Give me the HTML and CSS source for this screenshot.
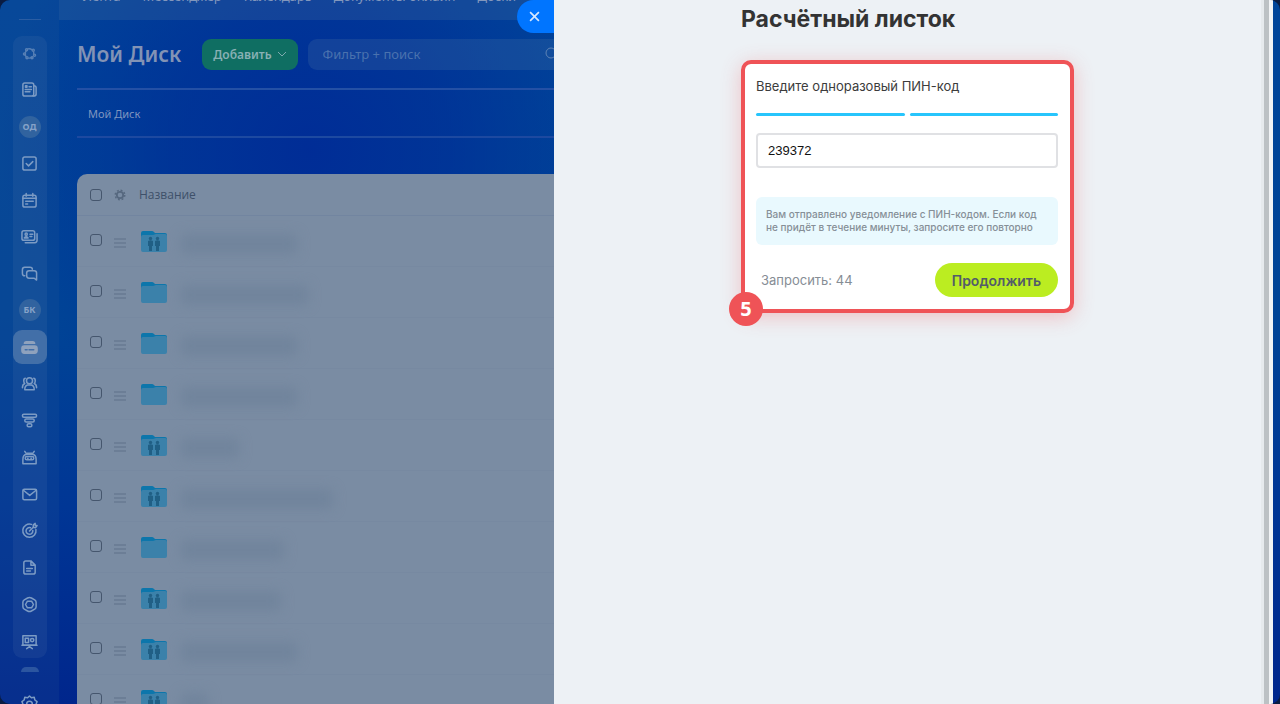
FILE: index.html
```html
<!DOCTYPE html>
<html lang="ru">
<head>
<meta charset="utf-8">
<title>Расчётный листок</title>
<link rel="stylesheet" href="styles.css">
</head>
<body>
<svg class="defs" aria-hidden="true">
  <symbol id="folder" viewBox="0 0 26 22">
    <path d="M0 2q0-2 2-2h9q1 0 2 1l1 1h10q2 0 2 2v5H0z" fill="#0d76ab"/>
    <path d="M0 6q0-2 2-2h10l3-1h9q2 0 2 2v14q0 2-2 2H2q-2 0-2-2z" fill="#3b81aa"/>
  </symbol>
  <symbol id="people" viewBox="0 0 26 22">
    <g fill="#205f85"><circle cx="9.500" cy="7.500" r="1.700"/><circle cx="16.500" cy="7.500" r="1.700"/>
    <path d="M7 10q2.500-1.500 5 0v5h-1v5H8v-5H7zM14 10q2.500-1.500 5 0v5h-1v5h-3v-5h-1z"/></g>
  </symbol>
  <symbol id="lines" viewBox="0 0 12 10"><path d="M0 1h12M0 5h12M0 9h12" stroke="#5f7189" stroke-width="1.200"/></symbol>
</svg>
<div class="portal">
  <nav class="sidebar" aria-label="Разделы">
    <hr class="side-rule">
    <div class="side-menu">
      <a href="#" class="side-item dim" aria-label="Совместная работа"><svg viewBox="0 0 18 18"><path d="M4 8a5 5 0 0 1 2-3M7 3.500a5.500 5.500 0 0 1 5 1M14 7v2M13 13a6 6 0 0 1-5 1.500M5 13l-1.500-3"/><circle cx="5.500" cy="4.500" r="1.300"/><circle cx="13.500" cy="5" r="1.300"/><circle cx="15" cy="11" r="1.300"/><circle cx="3" cy="9.500" r="1.300"/><circle cx="6" cy="14" r="1.300"/><circle cx="12" cy="14" r="1.300"/></svg></a>
      <a href="#" class="side-item" aria-label="Лента"><svg viewBox="0 0 18 18"><rect x="2" y="2" width="11.500" height="14" rx="2"/><path d="M13.500 5q2.500 0 2.500 2v7q0 2-3 2M4.500 9h6.500M4.500 11.500h5M8.500 6H11"/><rect x="4.800" y="5" width="1.500" height="1.500"/></svg></a>
      <a href="#" class="side-item"><span class="round">ОД</span></a>
      <a href="#" class="side-item" aria-label="Задачи"><svg viewBox="0 0 18 18"><rect x="2" y="2" width="14" height="14" rx="2"/><path d="M5.500 9l2.500 2.500 4.500-4.500"/></svg></a>
      <a href="#" class="side-item" aria-label="Календарь"><svg viewBox="0 0 18 18"><rect x="2" y="3.500" width="14" height="12.500" rx="2"/><path d="M2 6.500h14M5.500 1.500v3M12.500 1.500v3"/><path d="M5 9.800h2M8 9.800h2M11 9.800h2M5 12.800h2"/></svg></a>
      <a href="#" class="side-item" aria-label="Контакты"><svg viewBox="0 0 18 18"><rect x="1" y="3" width="13.500" height="10" rx="2"/><path d="M4.500 15.500h10q2.500 0 2.500-2.500V6M9.500 6.500h3M9.500 9h2"/><circle cx="5.500" cy="6.500" r="1.200"/><path d="M3.500 10.500q2-2.500 4 0z"/></svg></a>
      <a href="#" class="side-item" aria-label="Чаты"><svg viewBox="0 0 18 18"><path d="M4 11.500q-2.500 0-2.500-2.500V5q0-2.500 2.500-2.500h5.500Q12 2.500 12 4.500"/><path d="M8.500 6h5.500q2.500 0 2.500 2.500V16l-2.500-2H8.500Q6 14 6 11.500v-3Q6 6 8.500 6z"/></svg></a>
      <a href="#" class="side-item"><span class="round">БК</span></a>
      <a href="#" class="side-item active" aria-label="Диск"><svg viewBox="0 0 18 18"><path d="M3.500 4.500Q4 3 5.500 3h7q1.500 0 2 1.500z" fill="#8fa2bd"/><rect x="1" y="7.500" width="16" height="7.500" rx="2.500" fill="#8fa2bd"/><path d="M4.500 11.300h2M8.500 11.300h5" class="cut"/></svg></a>
      <a href="#" class="side-item" aria-label="Сотрудники"><svg viewBox="0 0 18 18"><circle cx="9" cy="6" r="3.200"/><path d="M4 15.500q0-4.500 3-5h4q3 .5 3 5zM4.500 3.500Q2.500 4 3 7q0 1.500 1 2-2.500 1-2.500 4.500M13.500 3.500Q15.500 4 15 7q0 1.500-1 2 2.500 1 2.500 4.500"/></svg></a>
      <a href="#" class="side-item" aria-label="CRM"><svg viewBox="0 0 18 18"><rect x="1.500" y="2.500" width="15" height="3" rx="1.500"/><rect x="4" y="7.500" width="10" height="3" rx="1.500"/><rect x="6.500" y="12.500" width="5" height="3" rx="1.500"/></svg></a>
      <a href="#" class="side-item" aria-label="Роботы"><svg viewBox="0 0 18 18"><path d="M2 15.500V11q0-5 4-5.500h6q4 .5 4 5.500v4.500zM6 5.500L4 2.500M12 5.500l2-3M6.500 4.500h5"/><rect x="4.500" y="8" width="9" height="3.500" rx="1.700"/><path d="M7 9.800h.5M10.500 9.800h.5"/></svg></a>
      <a href="#" class="side-item" aria-label="Почта"><svg viewBox="0 0 18 18"><rect x="2" y="3.500" width="14.500" height="11" rx="1.500"/><path d="M2.500 4.500L9.200 10l6.800-5.500"/></svg></a>
      <a href="#" class="side-item" aria-label="Маркетинг"><svg viewBox="0 0 18 18"><path d="M11 2.500A7 7 0 1 0 15.800 8"/><path d="M10 6a3.600 3.600 0 1 0 2.500 3"/><path d="M9 9.500l4-4M13 5.500V3l2-1.500v2.300h2L15.500 6z"/></svg></a>
      <a href="#" class="side-item" aria-label="Документы"><svg viewBox="0 0 18 18"><path d="M5 2h5.500L15 6.500V14q0 2-2 2H5q-2 0-2-2V4q0-2 2-2zM10.500 2v4.500H15M6 10h6M6 12.800h4"/></svg></a>
      <a href="#" class="side-item" aria-label="Маркет"><svg viewBox="0 0 18 18"><path d="M9 1.500q1 0 2 .6l3.500 2q1.500 1 1.500 2.500v4.800q0 1.500-1.500 2.500l-3.500 2q-2 1-4 0l-3.500-2Q2 12.900 2 11.400V6.600q0-1.500 1.500-2.500L7 2.100q1-.6 2-.6z"/><path d="M6.800 5.500h4.400l2 3.500-2 3.500H6.800L4.800 9z"/></svg></a>
      <a href="#" class="side-item" aria-label="Сайты"><svg viewBox="0 0 18 18"><rect x="2" y="3" width="14" height="10"/><path d="M1 13h16M9 13v2M6 16.500l3-2 3 2"/><rect x="4.500" y="5.500" width="3.500" height="4.500"/><circle cx="11.800" cy="7.500" r="1.800"/></svg></a>
    </div>
    <div class="side-foot">
      <span class="half-moon"></span>
      <a href="#" class="side-gear" aria-label="Настройки"><svg viewBox="0 0 18 18"><path d="M9 1l2 2 3-.5.7 2.800L17 7l-1 2.500 1 2.500-2.500 1.500L14 16H4l-.5-2.500L1 12l1-2.500L1 7l2.300-1.700L4 2.500 7 3z"/><circle cx="9" cy="9.500" r="3"/></svg></a>
    </div>
  </nav>

  <main class="workspace">
    <nav class="top-menu">
      <a href="#">Лента</a><a href="#">Мессенджер</a><a href="#">Календарь</a><a href="#">Документы онлайн</a><a href="#">Доски</a><a href="#">Диск</a>
    </nav>
    <div class="content">
      <div class="toolbar">
        <h1 class="page-title">Мой Диск</h1>
        <button class="add" type="button">Добавить<svg viewBox="0 0 10 6"><path d="M1 1l4 4 4-4"/></svg></button>
        <label class="search"><input type="text" placeholder="Фильтр + поиск" aria-label="Фильтр и поиск"><svg viewBox="0 0 14 14"><circle cx="6" cy="6" r="5"/><path d="M10 10l3 3"/></svg></label>
      </div>
      <div class="crumbs"><a href="#">Мой Диск</a></div>
      <table class="files">
        <colgroup><col class="c-check"><col class="c-menu"><col class="c-icon"><col></colgroup>
        <thead>
          <tr>
            <th><input type="checkbox" aria-label="Выбрать все"></th>
            <th><svg class="cog" viewBox="0 0 12 12"><circle cx="6" cy="6" r="3.200" stroke-width="1.800"/><circle cx="6" cy="6" r="4.800" stroke-width="1.400" stroke-dasharray="1.900 1.870"/></svg></th>
            <th colspan="2">Название</th>
          </tr>
        </thead>
        <tbody>
          <tr><td><input type="checkbox" aria-label="Папка 1"></td><td><svg class="drag"><use href="#lines"/></svg></td><td><svg class="folder"><use href="#folder"/><use href="#people"/></svg></td><td><span class="hidden-name" style="width:116px"></span></td></tr>
          <tr><td><input type="checkbox" aria-label="Папка 2"></td><td><svg class="drag"><use href="#lines"/></svg></td><td><svg class="folder"><use href="#folder"/></svg></td><td><span class="hidden-name" style="width:127px"></span></td></tr>
          <tr><td><input type="checkbox" aria-label="Папка 3"></td><td><svg class="drag"><use href="#lines"/></svg></td><td><svg class="folder"><use href="#folder"/></svg></td><td><span class="hidden-name" style="width:116px"></span></td></tr>
          <tr><td><input type="checkbox" aria-label="Папка 4"></td><td><svg class="drag"><use href="#lines"/></svg></td><td><svg class="folder"><use href="#folder"/></svg></td><td><span class="hidden-name" style="width:116px"></span></td></tr>
          <tr><td><input type="checkbox" aria-label="Папка 5"></td><td><svg class="drag"><use href="#lines"/></svg></td><td><svg class="folder"><use href="#folder"/><use href="#people"/></svg></td><td><span class="hidden-name" style="width:58px"></span></td></tr>
          <tr><td><input type="checkbox" aria-label="Папка 6"></td><td><svg class="drag"><use href="#lines"/></svg></td><td><svg class="folder"><use href="#folder"/><use href="#people"/></svg></td><td><span class="hidden-name" style="width:152px"></span></td></tr>
          <tr><td><input type="checkbox" aria-label="Папка 7"></td><td><svg class="drag"><use href="#lines"/></svg></td><td><svg class="folder"><use href="#folder"/></svg></td><td><span class="hidden-name" style="width:103px"></span></td></tr>
          <tr><td><input type="checkbox" aria-label="Папка 8"></td><td><svg class="drag"><use href="#lines"/></svg></td><td><svg class="folder"><use href="#folder"/><use href="#people"/></svg></td><td><span class="hidden-name" style="width:100px"></span></td></tr>
          <tr><td><input type="checkbox" aria-label="Папка 9"></td><td><svg class="drag"><use href="#lines"/></svg></td><td><svg class="folder"><use href="#folder"/><use href="#people"/></svg></td><td><span class="hidden-name" style="width:116px"></span></td></tr>
          <tr><td><input type="checkbox" aria-label="Папка 10"></td><td><svg class="drag"><use href="#lines"/></svg></td><td><svg class="folder"><use href="#folder"/><use href="#people"/></svg></td><td><span class="hidden-name" style="width:27px"></span></td></tr>
        </tbody>
      </table>
    </div>
  </main>

  <aside class="panel">
    <button class="close" type="button" aria-label="Закрыть"><svg viewBox="0 0 10 10"><path d="M1 1l8 8M9 1L1 9"/></svg></button>
    <div class="panel-body">
      <div class="slip">
        <h2 class="slip-title">Расчётный листок</h2>
        <form class="card">
          <label class="card-label" for="pin">Введите одноразовый ПИН-код</label>
          <div class="steps"><span></span><span></span></div>
          <input class="pin" id="pin" type="text" value="239372">
          <p class="notice">Вам отправлено уведомление с ПИН-кодом. Если код не придёт в течение минуты, запросите его повторно</p>
          <div class="actions">
            <span class="retry">Запросить: 44</span>
            <button class="next" type="button">Продолжить</button>
          </div>
          <span class="badge">5</span>
        </form>
      </div>
    </div>
    <div class="scrollbar"></div>
  </aside>
</div>
</body>
</html>
```
FILE: styles.css
```css
* { box-sizing: border-box; }
body { margin: 0; background: #0a1c42; font-family: "Noto Sans", "Open Sans", sans-serif; }
a { color: inherit; text-decoration: none; }
button, input { font-family: inherit; }
.defs { display: none; }

.portal {
  display: grid;
  grid-template-columns: 59px minmax(0, 495fr) minmax(0, 719fr) 7px;
  height: 100vh;
  overflow: hidden;
  border-radius: 10px;
  background:
    radial-gradient(ellipse 310px 320px at 310px 150px, rgba(0, 42, 150, .9), rgba(0, 42, 150, .6) 45%, rgba(0, 42, 150, 0)),
    linear-gradient(180deg, #00459a 0%, #004496 45%, #003695 72%, #00268c 100%);
}

.sidebar {
  display: flex;
  flex-direction: column;
  align-items: center;
  min-height: 0;
  background: rgba(40, 90, 150, .18);
}
.side-rule { width: 22px; height: 1px; margin: 19px 0 16px; border: 0; background: #2a5da3; }
.side-menu {
  display: flex;
  flex: 1;
  flex-direction: column;
  justify-content: space-between;
  width: 34px;
  border-radius: 9px;
  background: rgba(90, 130, 180, .14);
}
.side-item { display: grid; place-items: center; height: 34px; border-radius: 9px; }
.side-item.active { background: #426fa8; }
.side-item svg, .side-gear svg { width: 17px; height: 17px; fill: none; stroke: #7c9bc4; stroke-width: 1.600; stroke-linejoin: round; stroke-linecap: round; }
.side-item.dim svg { opacity: .65; width: 15px; height: 15px; }
.side-item.active svg { stroke: #8fa2bd; }
.side-item .cut { stroke: #426fa8; }
.round { width: 22px; height: 22px; border-radius: 50%; background: #31639f; color: #86a2c8; font-size: 9px; font-weight: 700; line-height: 22px; text-align: center; }
.side-foot { display: flex; flex-direction: column; align-items: center; height: 46px; padding-top: 9px; overflow: hidden; }
.half-moon { flex: none; width: 18px; height: 5px; border-radius: 9px 9px 0 0; background: #2b55a0; }
.side-gear { margin-top: 23px; }
.side-gear svg { display: block; }

.workspace { display: flex; flex-direction: column; min-height: 0; overflow: hidden; }
.top-menu { display: flex; flex: none; gap: 22px; height: 20px; padding-left: 24px; overflow: hidden; background: rgba(70, 110, 160, .27); color: #8297bd; font-size: 13px; line-height: 20px; white-space: nowrap; }
.top-menu a { margin-top: -14px; }
.content { padding-left: 18px; }
.toolbar { display: flex; align-items: center; height: 70px; border-bottom: 2px solid #2450a5; }
.page-title { margin: 0 21px 0 0; color: #8293b5; font-size: 21px; font-weight: 600; line-height: 30px; white-space: nowrap; }
.add { display: flex; flex: none; align-items: center; gap: 5px; height: 31px; margin-right: 10px; padding: 0 11px; border: 0; border-radius: 9px; background: #0f6e62; color: #88b0b4; font-size: 12px; font-weight: 600; }
.add svg { width: 10px; height: 6px; fill: none; stroke: #7eaaae; }
.search { display: flex; flex: 1; align-items: center; min-width: 0; height: 31px; padding-left: 15px; border-radius: 9px 0 0 9px; background: rgba(90, 130, 170, .2); overflow: hidden; }
.search input { flex: 1; min-width: 0; padding: 0; border: 0; outline: 0; background: none; color: #5b7fb5; font-size: 13px; }
.search input::placeholder { color: #4a72ae; opacity: 1; }
.search svg { flex: none; width: 14px; height: 14px; margin-right: -5px; fill: none; stroke: #5f83b5; }
.crumbs { height: 48px; padding-left: 11px; border-bottom: 2px solid #1d49a0; color: #7f95bf; font-size: 11px; line-height: 48px; }

.files { width: 100%; margin-top: 36px; border-spacing: 0; border-radius: 10px 0 0 0; background: #7a8ca3; table-layout: fixed; }
.files th { height: 42px; padding: 0; border-bottom: 1px solid #7285a0; color: #3e5069; font-family: "Open Sans", sans-serif; font-size: 12px; font-weight: 400; text-align: left; }
.files td { height: 51px; padding: 0; border-bottom: 1px solid #7789a1; vertical-align: top; }
.c-check { width: 37px; }
.c-menu { width: 25px; }
.c-icon { width: 42px; }
.files input { display: block; appearance: none; width: 12px; height: 12px; margin: 0 0 0 13px; border: 1px solid #45566d; border-radius: 3px; }
.files td input { margin-top: 18px; }
.cog { display: block; width: 12px; height: 12px; fill: none; stroke: #56687f; }
.drag { display: block; width: 12px; height: 10px; margin-top: 22px; }
.folder { display: block; width: 26px; height: 22px; margin: 15px 0 0 2px; }
.hidden-name { display: block; height: 20px; margin-top: 18px; border-radius: 4px; background: #71849c; filter: blur(6px); }

.panel { position: relative; display: flex; background: #edf1f5; font-family: Inter, sans-serif; }
.close { position: absolute; top: 0; right: 100%; display: grid; place-items: center; width: 37px; height: 33px; padding: 0 3px 0 0; border: 0; border-radius: 17px 0 0 17px; background: #0075ff; }
.close svg { width: 11px; height: 11px; fill: none; stroke: #d5e8ff; stroke-width: 1.500; }
.panel-body { flex: 1; padding: 4px 16px; }
.scrollbar { width: 12px; border-left: 3px solid #e6eaed; border-right: 4px solid #f1f3f5; background: #bcc1c4; }
.slip { max-width: 333px; margin: 0 auto; }
.slip-title { margin: 0 0 26px; color: #333; font-size: 23px; font-weight: 700; line-height: 30px; white-space: nowrap; }
.card { position: relative; padding: 12px 12px 12px 11px; border: 4px solid #ef5357; border-radius: 10px; background: #fff; box-shadow: 0 4px 20px rgba(239, 83, 87, .3); }
.card-label { display: block; color: #3c3c3c; font-size: 13px; font-weight: 400; line-height: 20px; }
.steps { display: flex; gap: 5px; margin: 17px 0; }
.steps span { flex: 1; height: 3px; border-radius: 2px; background: #27c5fc; }
.pin { display: block; width: 100%; height: 35px; padding: 0 10px; border: 2px solid #e0e1e4; border-radius: 4px; color: #111; font-family: "Liberation Sans", sans-serif; font-size: 13px; }
.notice { margin: 29px 0 18px; padding: 11px 10px; border-radius: 6px; background: #e9f9fe; color: #868f97; font-size: 10px; font-weight: 500; line-height: 13px; }
.actions { display: flex; align-items: center; justify-content: space-between; padding-left: 5px; }
.retry { color: #868d95; font-size: 13px; font-weight: 400; }
.next { height: 34px; padding: 0 17px; border: 0; border-radius: 17px; background: #bbed21; color: #535c69; font-size: 14px; font-weight: 600; }
.badge { position: absolute; left: -16px; bottom: -17px; width: 34px; height: 34px; border-radius: 50%; background: #ef5357; color: #fff; font-family: "Noto Sans", sans-serif; font-size: 20px; font-weight: 700; line-height: 34px; text-align: center; }
```
